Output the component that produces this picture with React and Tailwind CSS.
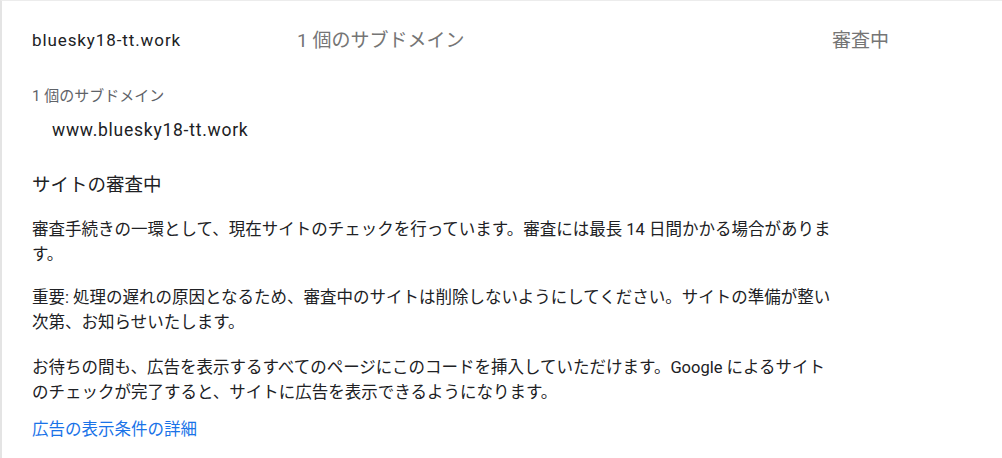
export default function App() {
  return (
    <div className="w-[1002px] h-[458px] bg-white overflow-hidden" style={{ fontFamily: 'Roboto, "Noto Sans CJK JP", sans-serif' }}>
      <div className="h-full border-t border-l-2 border-t-[#ececec] border-l-[#e4e4e4]">
        <div className="flex items-center h-[80px] pl-[30px]">
          <div className="w-[265px] text-[17px] tracking-[0.9px] text-[#202124]">bluesky18-tt.work</div>
          <div className="w-[535px] text-[19px] text-[#757575]">1 個のサブドメイン</div>
          <div className="text-[19px] text-[#757575]">審査中</div>
        </div>

        <div className="pl-[30px]">
          <div className="text-[15px] text-[#5f6368] leading-[20px] mt-[5px]">1 個のサブドメイン</div>
          <div className="pl-[20px] text-[17.5px] tracking-[0.75px] text-[#202124] leading-[24px] mt-[12px]">www.bluesky18-tt.work</div>

          <div className="text-[18.5px] text-[#202124] leading-[24px] mt-[31px]">サイトの審査中</div>

          <div className="w-[805px] text-[16.5px] text-[#202124] leading-[25px]">
            <p className="mt-[20px]">
              審査手続きの一環として、現在サイトのチェックを行っています。審査には最長 14 日間かかる場合があります。
            </p>
            <p className="mt-[18px]">
              重要: 処理の遅れの原因となるため、審査中のサイトは削除しないようにしてください。サイトの準備が整い次第、お知らせいたします。
            </p>
            <p className="mt-[20px]">
              お待ちの間も、広告を表示するすべてのページにこのコードを挿入していただけます。Google によるサイトのチェックが完了すると、サイトに広告を表示できるようになります。
            </p>
            <p className="mt-[12px]">
              <a href="#" className="text-[#1a73e8]">広告の表示条件の詳細</a>
            </p>
          </div>
        </div>
      </div>
    </div>
  )
}
